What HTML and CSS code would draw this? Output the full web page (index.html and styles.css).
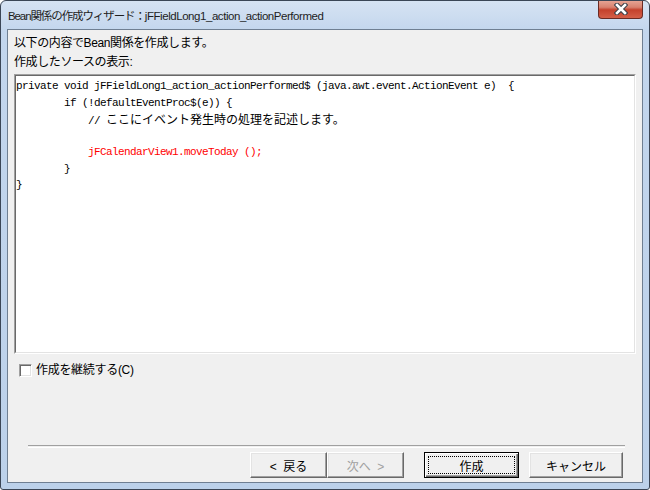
FILE: index.html
```html
<!DOCTYPE html>
<html>
<head>
  <meta charset="UTF-8">
  <title>Bean関係の作成ウィザード</title>
  <link rel="stylesheet" href="styles.css">
</head>
<body>
  <div class="window">
    <div class="titlebar">
      <span class="title"><span class="title-jp">Bean関係の作成ウィザード：</span><span class="title-en">jFFieldLong1_action_actionPerformed</span></span>
      <div class="close-btn">
        <svg class="close-icon" viewBox="0 0 14 12" xmlns="http://www.w3.org/2000/svg">
          <path d="M3 2L11 10M11 2L3 10" stroke="#3a3f48" stroke-width="4.6" stroke-linecap="square"/>
          <path d="M3 2L11 10M11 2L3 10" stroke="#ffffff" stroke-width="2.6" stroke-linecap="square"/>
        </svg>
      </div>
    </div>

    <div class="client">
      <div class="label">以下の内容でBean関係を作成します。</div>
      <div class="label">作成したソースの表示:</div>

      <div class="source">
        <div class="source-inner">
          <div class="code">
            <div class="line">private void jFFieldLong1_action_actionPerformed$ (java.awt.event.ActionEvent e)  {</div>
            <div class="line indent-1">if (!defaultEventProc$(e)) {</div>
            <div class="line indent-2">//<span class="jp">ここにイベント発生時の処理を記述します。</span></div>
            <div class="line"></div>
            <div class="line indent-2 added">jFCalendarView1.moveToday ();</div>
            <div class="line indent-1">}</div>
            <div class="line">}</div>
          </div>
        </div>
      </div>

      <div class="check-row">
        <span class="checkbox"></span>
        <span class="check-label">作成を継続する(C)</span>
      </div>

      <div class="spacer"></div>
      <div class="separator"></div>

      <div class="buttons">
        <div class="btn btn-back">&lt;&nbsp; 戻る</div>
        <div class="btn btn-next disabled">次へ &nbsp;&gt;</div>
        <div class="btn btn-create default">作成</div>
        <div class="btn btn-cancel">キャンセル</div>
      </div>
    </div>
  </div>
</body>
</html>
```

FILE: styles.css
```css
body {
  margin: 0;
  background-color: #ffffff;
  font-family: 'Liberation Sans', 'Noto Sans CJK JP', sans-serif;
}
.window {
  width: 650px;
  height: 490px;
  box-sizing: border-box;
  border: 1px solid #3b4656;
  border-radius: 6px 6px 3px 3px;
  background: linear-gradient(to bottom, #d6e3f3 0px, #c3d6ed 30px, #bcd1ea 100%);
  display: flex;
  flex-direction: column;
  overflow: hidden;
}
.titlebar {
  height: 28px;
  display: flex;
  align-items: flex-start;
}
.title {
  padding: 6px 0 0 7px;
  font-size: 11.5px;
  line-height: 18px;
  color: #1e1e1e;
}
.title-jp {
  letter-spacing: -1.1px;
}
.title-en {
  letter-spacing: -0.45px;
}
.close-btn {
  margin-left: auto;
  margin-right: 6px;
  margin-top: -1px;
  width: 45px;
  height: 19px;
  box-sizing: border-box;
  border: 1px solid #6a2b24;
  border-top: none;
  border-radius: 0 0 4px 4px;
  background: linear-gradient(to bottom, #e8a898 0%, #d88270 40%, #c4412c 55%, #d45f48 100%);
  display: flex;
  align-items: center;
  justify-content: center;
}
.close-icon {
  width: 14px;
  height: 12px;
}
.client {
  flex: 1;
  margin: 0 6px 6px 6px;
  border: 1px solid #6f7f92;
  background-color: #f0f0f0;
  padding: 4px 6px 4px 6px;
  display: flex;
  flex-direction: column;
}
.label {
  font-size: 12px;
  line-height: 19px;
  letter-spacing: -0.4px;
  color: #000000;
}
.source {
  margin-top: 2px;
  height: 280px;
  box-sizing: border-box;
  border: 1px solid;
  border-color: #a0a0a0 #ffffff #ffffff #a0a0a0;
  display: flex;
}
.source-inner {
  flex: 1;
  border: 1px solid;
  border-color: #696969 #e3e3e3 #e3e3e3 #696969;
  background-color: #ffffff;
  overflow: hidden;
}
.code {
  padding-top: 2px;
  font-family: 'Liberation Mono', 'Noto Sans CJK JP', monospace;
  font-size: 11px;
  letter-spacing: -0.6px;
  color: #000000;
}
.line {
  height: 16.5px;
  line-height: 16.5px;
  white-space: pre;
}
.indent-1 {
  padding-left: 48px;
}
.indent-2 {
  padding-left: 72px;
}
.line .jp {
  margin-left: 6px;
  font-family: 'Noto Sans CJK JP', sans-serif;
  font-size: 12px;
  letter-spacing: 0;
}
.line.added {
  color: #ff0000;
}
.check-row {
  margin-top: 10px;
  margin-left: 5px;
  display: flex;
  align-items: center;
  gap: 4px;
  height: 13px;
}
.checkbox {
  width: 13px;
  height: 13px;
  box-sizing: border-box;
  border: 1px solid;
  border-color: #a0a0a0 #ffffff #ffffff #a0a0a0;
  box-shadow: inset 1px 1px 0 #696969, inset -1px -1px 0 #e3e3e3;
  background-color: #ffffff;
}
.check-label {
  font-size: 12px;
  line-height: 13px;
  letter-spacing: -0.3px;
  color: #000000;
}
.spacer {
  flex: 1;
}
.separator {
  margin: 0 11px 0 14px;
  height: 1px;
  border-top: 1px solid #a0a0a0;
  border-bottom: 1px solid #ffffff;
}
.buttons {
  margin-top: 4px;
  display: flex;
  justify-content: flex-end;
  padding-right: 13px;
}
.btn {
  height: 26px;
  box-sizing: border-box;
  border: 1px solid;
  border-color: #ffffff #696969 #696969 #ffffff;
  box-shadow: inset -1px -1px 0 #a0a0a0, inset 1px 1px 0 #e3e3e3;
  background-color: #f0f0f0;
  font-size: 12px;
  display: flex;
  align-items: center;
  justify-content: center;
  color: #000000;
}
.btn-back {
  width: 77px;
}
.btn-next {
  width: 77px;
}
.btn-create {
  width: 95px;
  margin-left: 20px;
}
.btn-cancel {
  width: 94px;
  margin-left: 10px;
}
.btn.disabled {
  color: #a0a0a0;
}
.btn.default {
  border-color: #000000;
  box-shadow: inset 1px 1px 0 #ffffff, inset -1px -1px 0 #696969, inset -2px -2px 0 #a0a0a0;
  outline: 1px dotted #000000;
  outline-offset: -5px;
}
```
